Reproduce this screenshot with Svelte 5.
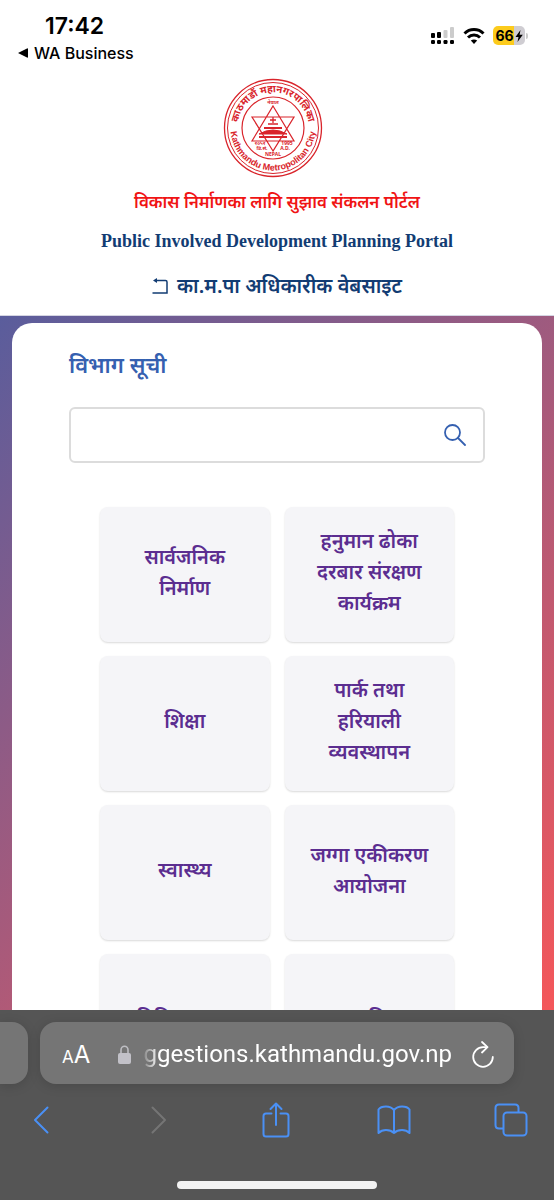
<script>
    let search = "";

    const departments = [
        "सार्वजनिक निर्माण",
        "हनुमान ढोका दरबार संरक्षण कार्यक्रम",
        "शिक्षा",
        "पार्क तथा हरियाली व्यवस्थापन",
        "स्वास्थ्य",
        "जग्गा एकीकरण आयोजना",
        "विविध शाखा",
        "कृषि",
    ];

    $: shown = departments.filter((name) => name.includes(search.trim()));
</script>

<div class="screen">
    <div class="status">
        <div class="clock">
            <div class="time">17:42</div>
            <a href="#back" class="backapp">
                <svg width="10" height="10" viewBox="0 0 10 10"><path d="M0 5 L9 0.5 Q10 0 10 1 V9 Q10 10 9 9.5 Z" /></svg>
                WA Business
            </a>
        </div>
        <div class="indicators">
            <svg width="24" height="18" viewBox="0 0 24 18">
                <g fill="#000">
                    <rect x="0" y="6" width="4" height="5" rx="1" />
                    <rect x="6" y="5" width="4" height="6" rx="1" />
                    <rect x="0" y="13" width="4" height="4" rx="1.2" />
                    <rect x="6" y="13" width="4" height="4" rx="1.2" />
                    <rect x="12.500" y="13" width="4" height="4" rx="1.2" />
                    <rect x="19" y="13" width="4" height="4" rx="1.2" />
                </g>
                <g fill="#ccc">
                    <rect x="12.500" y="3" width="4" height="8" rx="1" />
                    <rect x="19" y="0" width="4" height="11" rx="1" />
                </g>
            </svg>
            <svg width="22" height="18" viewBox="0 0 22 18" fill="none" stroke="#000" stroke-width="3">
                <path d="M1.500 6.500 A13.500 13.500 0 0 1 20.500 6.500" />
                <path d="M5 10.500 A8.600 8.600 0 0 1 17 10.500" />
                <path d="M11 17 L7.800 13.600 Q11 11.200 14.200 13.600 Z" fill="#000" stroke="none" />
            </svg>
            <div class="battery">
                <div class="level">
                    66<svg width="8" height="12" viewBox="0 0 8 12"><path d="M5.500 0 L0.500 7 H3.500 L2.500 12 L7.800 4.800 H4.600 Z" /></svg>
                </div>
                <span class="cap"></span>
            </div>
        </div>
    </div>

    <header>
        <svg width="108" height="100" viewBox="0 0 108 100" role="img" aria-label="Kathmandu Metropolitan City">
            <defs>
                <path id="arc-top" d="M16 60 A35.500 35.500 0 1 1 84 60" />
                <path id="arc-bottom" d="M7.500 50 A42.500 42.500 0 0 0 92.500 50" />
            </defs>
            <g fill="none" stroke="#d9242b">
                <circle cx="50" cy="50" r="48.500" stroke-width="1.300" />
                <circle cx="50" cy="50" r="45.500" stroke-width="1" />
                <circle cx="50" cy="50" r="31" stroke-width="1.200" />
                <path d="M50 28 L71 63 H29 Z M50 73 L29 39 H71 Z" stroke-width="1.200" />
                <path d="M50 39 V45 M47 42 H53 M45 46 H55" stroke-width="1.300" />
                <path d="M36 56 Q50 48 64 56 Z" fill="#d9242b" />
                <path d="M36 59 H64 M41 50 H59" stroke-width="1.800" />
            </g>
            <g fill="#d9242b" font-family="'Noto Sans', sans-serif" font-weight="700">
                <text font-size="10"><textPath href="#arc-top" startOffset="50%" text-anchor="middle">काठमाडौं महानगरपालिका</textPath></text>
                <text font-size="9" font-family="'Liberation Sans', Arial, sans-serif"><textPath href="#arc-bottom" startOffset="50%" text-anchor="middle">Kathmandu Metropolitan City</textPath></text>
                <g font-size="5" text-anchor="middle">
                    <text x="50" y="26">नेपाल</text>
                    <text x="37" y="67">२०५२</text>
                    <text x="39" y="72">वि.सं.</text>
                    <text x="64" y="67">1995</text>
                    <text x="62" y="72">A.D.</text>
                    <text x="50" y="78">NEPAL</text>
                </g>
            </g>
        </svg>
        <h1>विकास निर्माणका लागि सुझाव संकलन पोर्टल</h1>
        <h2>Public Involved Development Planning Portal</h2>
        <a href="#official" class="official">
            <svg width="17" height="17" viewBox="0 0 17 17" fill="none" stroke="#123c73" stroke-width="1.500">
                <path d="M4 2.500 H13.500 Q15 2.500 15 4 V15 H0.500" />
                <path d="M1 2.500 L5 0 V5 Z" fill="#123c73" stroke="none" />
            </svg>
            का.म.पा अधिकारीक वेबसाइट
        </a>
    </header>

    <main>
        <section class="card">
            <label for="query">विभाग सूची</label>
            <form class="search" on:submit|preventDefault>
                <input id="query" type="text" bind:value={search} />
                <button class="searchbutton" aria-label="Search">
                    <svg width="22" height="22" viewBox="0 0 22 22" fill="none" stroke="#3560b0" stroke-width="1.800" stroke-linecap="round">
                        <circle cx="8.500" cy="8.500" r="7.500" />
                        <path d="M14 14 L21 21" />
                    </svg>
                </button>
            </form>
            <div class="departments">
                {#each shown as name (name)}
                    <a href="#department" class="box">{name}</a>
                {/each}
            </div>
        </section>
    </main>

    <footer>
        <div class="tabs">
            <div class="othertab"></div>
            <div class="address">
                <button class="reader" aria-label="Page settings"><small>A</small>A</button>
                <svg width="13" height="19" viewBox="0 0 13 19">
                    <path d="M3 9 V5 A3.500 3.800 0 0 1 10 5 V9" fill="none" stroke="#bdbdc2" stroke-width="1.600" />
                    <rect x="0" y="8" width="13" height="11" rx="2" fill="#c2c1c8" />
                </svg>
                <button class="url">ggestions.kathmandu.gov.np</button>
                <button aria-label="Reload">
                    <svg width="22" height="27" viewBox="0 0 22 27" fill="none" stroke="#fff" stroke-width="1.800" stroke-linecap="round" stroke-linejoin="round">
                        <path d="M14.500 6.200 H11 A9.800 9.800 0 1 0 20.800 16" />
                        <path d="M10 1 L15.500 6.200 L10 11.500" />
                    </svg>
                </button>
            </div>
        </div>
        <nav>
            <button aria-label="Back">
                <svg width="16" height="28" viewBox="0 0 16 28"><path d="M14.500 1.500 L2 14 L14.500 26.500" /></svg>
            </button>
            <button aria-label="Forward" disabled>
                <svg width="16" height="28" viewBox="0 0 16 28"><path d="M1.500 1.500 L14 14 L1.500 26.500" /></svg>
            </button>
            <button aria-label="Share">
                <svg width="28" height="36" viewBox="0 0 28 36">
                    <path d="M9.500 11.500 H4 Q1.500 11.500 1.500 14 V32 Q1.500 34.500 4 34.500 H24 Q26.500 34.500 26.500 32 V14 Q26.500 11.500 24 11.500 H18.500" />
                    <path d="M14 23 V1.500 M8.500 7 L14 1.500 L19.500 7" />
                </svg>
            </button>
            <button aria-label="Bookmarks">
                <svg width="34" height="30" viewBox="0 0 34 30">
                    <path d="M17 5 Q14 1.500 9 1.500 Q3.500 1.500 1.500 4.500 V28 Q4.500 25 9 25 Q14 25 17 28 Q20 25 25 25 Q29.500 25 32.500 28 V4.500 Q30.500 1.500 25 1.500 Q20 1.500 17 5 Z M17 5 V28" />
                </svg>
            </button>
            <button aria-label="Tabs">
                <svg width="34" height="34" viewBox="0 0 34 34">
                    <rect x="9.500" y="9.500" width="23" height="23" rx="3.500" />
                    <path d="M9 25.500 H5 Q1.500 25.500 1.500 22 V5 Q1.500 1.500 5 1.500 H21 Q24.500 1.500 24.500 5 V9" />
                </svg>
            </button>
        </nav>
        <div class="homebar"></div>
    </footer>
</div>

<style>
    :global(body) {
        margin: 0;
    }
    .screen {
        display: flex;
        flex-direction: column;
        height: 100vh;
        overflow: hidden;
        background-color: white;
        font-family: "Noto Sans", sans-serif;
    }
    button {
        display: flex;
        align-items: center;
        padding: 0;
        border: none;
        background: none;
        cursor: pointer;
    }
    a {
        text-decoration: none;
    }

    .status {
        display: flex;
        justify-content: space-between;
        padding: 12px 26px 0 18px;
        color: black;
        font-family: Inter, sans-serif;
    }
    .time {
        padding-left: 27px;
        font-size: 23px;
        font-weight: 600;
        line-height: 28px;
    }
    .backapp {
        display: flex;
        align-items: center;
        gap: 6px;
        color: black;
        font-size: 16px;
        font-weight: 500;
        line-height: 26px;
    }
    .indicators {
        display: flex;
        align-items: center;
        align-self: flex-start;
        gap: 8px;
        padding-top: 14px;
    }
    .battery {
        display: flex;
        align-items: center;
        gap: 1px;
    }
    .level {
        display: flex;
        align-items: center;
        justify-content: center;
        gap: 1px;
        width: 32px;
        height: 19px;
        border-radius: 5px;
        background: linear-gradient(90deg, #fccb1c 66%, #cfcdd2 66%);
        font-size: 14px;
        font-weight: 700;
    }
    .cap {
        width: 2px;
        height: 6px;
        border-radius: 0 2px 2px 0;
        background-color: #ccc;
    }

    header {
        display: flex;
        flex-direction: column;
        align-items: center;
        padding: 12px 16px 13px;
        border-bottom: 1px solid #d5d5e2;
        text-align: center;
    }
    h1 {
        margin: 9px 0 0;
        color: #f01414;
        font-size: 17px;
        font-weight: 600;
        line-height: 30px;
    }
    h2 {
        margin: 10px 0 0;
        color: #123c73;
        font-family: "Liberation Serif", serif;
        font-size: 18px;
        font-weight: 700;
        line-height: 28px;
    }
    .official {
        display: flex;
        align-items: center;
        gap: 8px;
        margin-top: 15px;
        color: #123c73;
        font-size: 20px;
        font-weight: 600;
        line-height: 32px;
    }

    main {
        flex: 1;
        min-height: 0;
        overflow: hidden;
        padding: 7px 12px 0;
        background: linear-gradient(135deg, #5a5d9c, #f4575a);
    }
    .card {
        padding: 23px 57px 0;
        border-radius: 20px;
        background-color: white;
    }
    label {
        display: block;
        color: #3560b0;
        font-size: 22px;
        font-weight: 600;
        line-height: 36px;
    }
    .search {
        display: flex;
        margin-top: 25px;
        border: 2px solid #dcdcdc;
        border-radius: 6px;
    }
    .search input {
        flex: 1;
        min-width: 0;
        height: 52px;
        padding: 0 16px;
        border: none;
        outline: none;
        background: none;
        font-size: 20px;
    }
    .searchbutton {
        padding: 0 17px;
    }
    .departments {
        display: grid;
        grid-template-columns: 1fr 1fr;
        gap: 14px 15px;
        padding: 44px 31px 15px;
    }
    .box {
        display: flex;
        align-items: center;
        justify-content: center;
        box-sizing: border-box;
        height: 135px;
        padding: 0 24px 6px;
        border-radius: 8px;
        background-color: #f5f5f8;
        box-shadow: 0 1px 2px rgba(0, 0, 0, 0.15);
        color: #5b2d90;
        font-size: 20px;
        font-weight: 600;
        line-height: 31px;
        text-align: center;
    }

    footer {
        background-color: #555;
        padding: 12px 0 11px;
    }
    .tabs {
        display: flex;
        gap: 12px;
        padding-right: 40px;
    }
    .othertab {
        width: 28px;
        border-radius: 0 16px 16px 0;
        background-color: #757575;
        box-shadow: 0 2px 12px rgba(0, 0, 0, 0.15);
    }
    .address {
        display: flex;
        align-items: center;
        flex: 1;
        min-width: 0;
        box-sizing: border-box;
        height: 62px;
        padding: 2px 20px 0 22px;
        border-radius: 16px;
        background-color: #757575;
        box-shadow: 0 2px 12px rgba(0, 0, 0, 0.15);
    }
    .reader {
        align-items: baseline;
        margin-right: 28px;
        color: white;
        font-family: Inter, sans-serif;
        font-size: 24px;
    }
    .reader small {
        font-size: 17px;
    }
    .url {
        flex: 1;
        min-width: 0;
        justify-content: flex-end;
        margin: 0 20px 0 10px;
        overflow: hidden;
        color: white;
        font-family: Roboto, sans-serif;
        font-size: 24px;
        line-height: 32px;
        mask-image: linear-gradient(90deg, transparent, black 18px);
    }
    nav {
        display: flex;
        align-items: center;
        justify-content: space-between;
        height: 36px;
        padding: 18px 26px 0 24px;
    }
    nav button {
        justify-content: center;
        width: 34px;
    }
    nav svg {
        fill: none;
        stroke: #4a90f5;
        stroke-width: 2;
        stroke-linecap: round;
        stroke-linejoin: round;
    }
    nav button:disabled svg {
        stroke: #757575;
    }
    .homebar {
        width: 36%;
        height: 8px;
        margin: 43px auto 0;
        border-radius: 4px;
        background-color: #f2f2f2;
    }
</style>
